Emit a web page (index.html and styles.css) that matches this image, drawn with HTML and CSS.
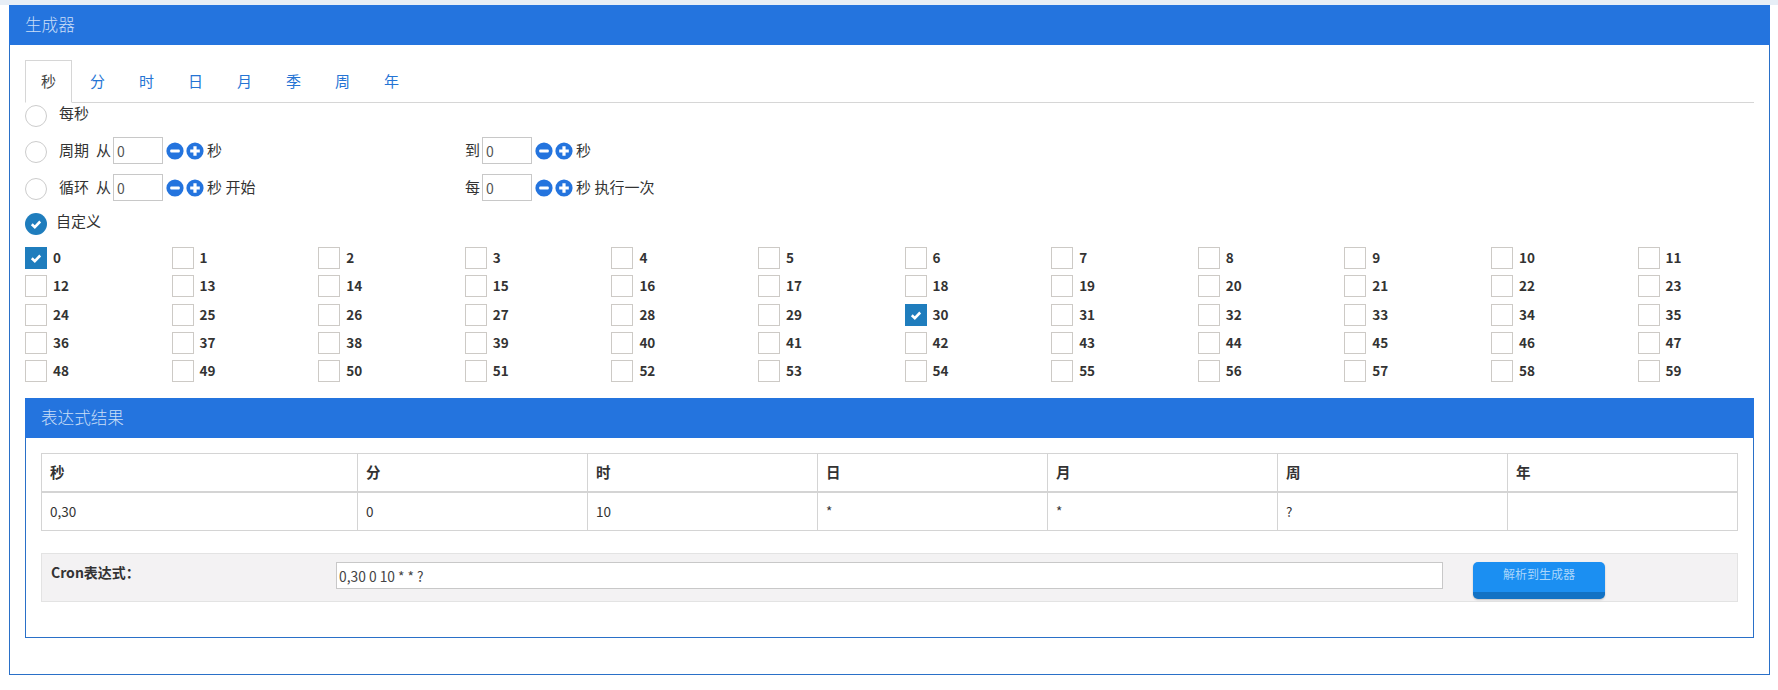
FILE: index.html
```html
<!DOCTYPE html>
<html lang="zh-CN">
<head>
    <meta charset="UTF-8">
    <title>Cron 表达式生成器</title>
    <link rel="stylesheet" href="styles.css">
</head>
<body>
    <div class="top-strip"></div>

    <div class="panel panel-outer">
        <div class="panel-heading">生成器</div>
        <div class="panel-body">
            <ul class="tabs">
                <li class="tab active">秒</li>
                <li class="tab">分</li>
                <li class="tab">时</li>
                <li class="tab">日</li>
                <li class="tab">月</li>
                <li class="tab">季</li>
                <li class="tab">周</li>
                <li class="tab">年</li>
            </ul>

            <div class="options">
                <div class="option option-first">
                    <span class="radio"></span>
                    <span class="option-label">每秒</span>
                </div>
                <div class="option option-input">
                    <div class="option-left">
                        <span class="radio"></span>
                        <span class="option-label">周期</span>
                        <span class="from">从</span>
                        <input class="spin-input" type="text" value="0">
                        <svg class="spin-btn" viewBox="0 0 18 18"><circle cx="9" cy="9" r="8.6"/><rect x="4.2" y="7.4" width="9.6" height="3.2" rx="1" class="glyph"/></svg>
                        <svg class="spin-btn" viewBox="0 0 18 18"><circle cx="9" cy="9" r="8.6"/><path d="M7.4 4.2h3.2v3.2h3.2v3.2h-3.2v3.2H7.4v-3.2H4.2V7.4h3.2z" class="glyph"/></svg>
                        <span class="unit">秒</span>
                    </div>
                    <span class="from">到</span>
                    <input class="spin-input" type="text" value="0">
                    <svg class="spin-btn" viewBox="0 0 18 18"><circle cx="9" cy="9" r="8.6"/><rect x="4.2" y="7.4" width="9.6" height="3.2" rx="1" class="glyph"/></svg>
                    <svg class="spin-btn" viewBox="0 0 18 18"><circle cx="9" cy="9" r="8.6"/><path d="M7.4 4.2h3.2v3.2h3.2v3.2h-3.2v3.2H7.4v-3.2H4.2V7.4h3.2z" class="glyph"/></svg>
                    <span class="unit">秒</span>
                </div>
                <div class="option option-input">
                    <div class="option-left">
                        <span class="radio"></span>
                        <span class="option-label">循环</span>
                        <span class="from">从</span>
                        <input class="spin-input" type="text" value="0">
                        <svg class="spin-btn" viewBox="0 0 18 18"><circle cx="9" cy="9" r="8.6"/><rect x="4.2" y="7.4" width="9.6" height="3.2" rx="1" class="glyph"/></svg>
                        <svg class="spin-btn" viewBox="0 0 18 18"><circle cx="9" cy="9" r="8.6"/><path d="M7.4 4.2h3.2v3.2h3.2v3.2h-3.2v3.2H7.4v-3.2H4.2V7.4h3.2z" class="glyph"/></svg>
                        <span class="unit">秒 开始</span>
                    </div>
                    <span class="from">每</span>
                    <input class="spin-input" type="text" value="0">
                    <svg class="spin-btn" viewBox="0 0 18 18"><circle cx="9" cy="9" r="8.6"/><rect x="4.2" y="7.4" width="9.6" height="3.2" rx="1" class="glyph"/></svg>
                    <svg class="spin-btn" viewBox="0 0 18 18"><circle cx="9" cy="9" r="8.6"/><path d="M7.4 4.2h3.2v3.2h3.2v3.2h-3.2v3.2H7.4v-3.2H4.2V7.4h3.2z" class="glyph"/></svg>
                    <span class="unit">秒 执行一次</span>
                </div>
                <div class="option">
                    <svg class="radio-checked" viewBox="0 0 22 22"><circle cx="11" cy="11" r="11"/><path d="M6.8 11.2l3 2.9 5.4-5.6" class="tick"/></svg>
                    <span class="option-label option-label-tight">自定义</span>
                </div>
            </div>

            <div class="checks" id="checks"></div>

            <div class="panel panel-inner">
                <div class="panel-heading">表达式结果</div>
                <div class="panel-body">
                    <table class="result">
                        <thead>
                            <tr>
                                <th class="col-first">秒</th>
                                <th>分</th>
                                <th>时</th>
                                <th>日</th>
                                <th>月</th>
                                <th>周</th>
                                <th>年</th>
                            </tr>
                        </thead>
                        <tbody>
                            <tr>
                                <td>0,30</td>
                                <td>0</td>
                                <td>10</td>
                                <td>*</td>
                                <td>*</td>
                                <td>?</td>
                                <td></td>
                            </tr>
                        </tbody>
                    </table>

                    <div class="cron-bar">
                        <div class="cron-label">Cron表达式：</div>
                        <input class="cron-input" type="text" value="0,30 0 10 * * ?">
                        <button class="cron-btn">解析到生成器</button>
                    </div>
                </div>
            </div>
        </div>
    </div>

    <script>
        // 0-59 的复选框
        const checks = document.getElementById('checks');
        const picked = [0, 30];
        for (let i = 0; i < 60; i++) {
            const item = document.createElement('div');
            item.className = 'check-item';
            const box = picked.includes(i)
                ? '<svg class="box-checked" viewBox="0 0 22 22"><rect width="22" height="22"/><path d="M6.8 11.2l3 2.9 5.4-5.6" class="tick"/></svg>'
                : '<span class="box"></span>';
            item.innerHTML = box + '<span class="check-num">' + i + '</span>';
            checks.appendChild(item);
        }
    </script>
</body>
</html>
```

FILE: styles.css
```css
* {
    box-sizing: border-box;
}

body {
    margin: 0;
    background-color: #ffffff;
    font-family: "Noto Sans CJK SC", "Noto Sans", sans-serif;
    font-size: 14px;
    color: #333333;
}

.top-strip {
    height: 5px;
    background-color: #e7eef6;
}

.panel {
    border: 1px solid #2a70c8;
    border-top: none;
    background-color: #ffffff;
}

.panel-heading {
    height: 40px;
    margin: 0 -1px;
    padding-left: 16px;
    background-color: #2474de;
    color: #c9def7;
    font-size: 16.6px;
    font-weight: 300;
    line-height: 38px;
}

.panel-outer {
    margin: 0 8px 0 9px;
    height: 670px;
}

.panel-outer > .panel-body {
    padding: 15px;
}

.panel-inner > .panel-body {
    padding: 15px 15px 35px;
}

/* tabs */
.tabs {
    display: flex;
    height: 43px;
    margin: 0;
    padding: 0;
    list-style: none;
    border-bottom: 1px solid #d6d6d6;
}

.tab {
    height: 42px;
    margin-right: 2px;
    padding: 0 15px;
    border: 1px solid transparent;
    color: #2574d4;
    font-size: 15px;
    line-height: 40px;
}

.tab.active {
    height: 43px;
    border-color: #d6d6d6;
    border-bottom-color: #ffffff;
    color: #444444;
}

/* radio rows */
.options {
    display: flex;
    flex-direction: column;
    gap: 10px;
    margin-top: 1px;
    font-size: 15px;
}

.option {
    display: flex;
    align-items: center;
    height: 27px;
}

.option-first {
    height: 23px;
}

.option-first .option-label {
    margin-top: -6px;
}

.option-left {
    display: flex;
    align-items: center;
    width: 440px;
}

.option-input .option-label,
.option-input .from,
.option-input .unit {
    margin-bottom: 2px;
}

.radio {
    width: 22px;
    height: 22px;
    border: 1px solid #cccccc;
    border-radius: 50%;
    background-color: #ffffff;
    flex-shrink: 0;
}

.option-input .radio {
    margin-top: 3px;
}

.radio-checked {
    width: 22px;
    height: 22px;
    margin-top: -1px;
    flex-shrink: 0;
    fill: #1f7dbd;
}

.tick {
    fill: none;
    stroke: #ffffff;
    stroke-width: 2.6;
}

.option-label {
    margin-left: 12px;
    line-height: 20px;
}

.option .option-label-tight {
    margin-left: 9px;
    margin-top: -8px;
}

.from {
    margin-left: 7px;
}

.option-input > .from {
    margin-left: 0;
}

.spin-input {
    width: 50px;
    height: 27px;
    margin-left: 2px;
    padding: 0 3px;
    border: 1px solid #c8c8c8;
    background-color: #ffffff;
    font-family: inherit;
    font-size: 14px;
    color: #555555;
}

.spin-btn {
    width: 18px;
    height: 18px;
    margin-left: 2px;
    fill: #2474de;
}

.spin-input + .spin-btn {
    margin-left: 3px;
}

.spin-btn .glyph {
    fill: #ffffff;
}

.unit {
    margin-left: 3px;
}

/* 0-59 */
.checks {
    display: grid;
    grid-template-columns: repeat(12, 146.6px);
    grid-auto-rows: 28.25px;
    margin-top: 9px;
    margin-bottom: 10px;
}

.check-item {
    display: flex;
    align-items: flex-start;
    gap: 6px;
}

.box {
    width: 22px;
    height: 22px;
    border: 1px solid #cdcac6;
    background-color: #ffffff;
}

.box-checked {
    width: 22px;
    height: 22px;
    fill: #1f7dbd;
}

.check-num {
    font-weight: 700;
    font-size: 13.5px;
    line-height: 20px;
}

/* result table */
.result {
    width: 100%;
    table-layout: fixed;
    border-collapse: collapse;
    font-size: 13.5px;
}

.result th,
.result td {
    height: 39px;
    padding: 0 8px 2px;
    border: 1px solid #d4d4d4;
    text-align: left;
}

.result th {
    height: 38px;
    border-bottom-width: 2px;
    font-size: 14.5px;
    font-weight: 700;
}

.col-first {
    width: 316px;
}

.cron-bar {
    display: flex;
    align-items: flex-start;
    height: 49px;
    margin-top: 22px;
    padding: 8px 0 0 9px;
    border: 1px solid #e3e3e3;
    background-color: #f3f2f3;
}

.cron-label {
    width: 285px;
    font-weight: 700;
    line-height: 20px;
}

.cron-input {
    width: 1107px;
    height: 27px;
    padding: 0 2px;
    border: 1px solid #c8c8c8;
    background-color: #ffffff;
    font-family: inherit;
    font-size: 13.8px;
    color: #444444;
}

.cron-btn {
    width: 132px;
    height: 37px;
    margin-left: 30px;
    padding: 0 0 7px;
    border: none;
    border-bottom: 7px solid #1272c4;
    border-radius: 5px;
    background-color: #1b8ff2;
    box-shadow: 0 1px 2px rgba(0, 0, 0, 0.2);
    color: #a9d6fb;
    font-family: inherit;
    font-size: 12px;
}
```
